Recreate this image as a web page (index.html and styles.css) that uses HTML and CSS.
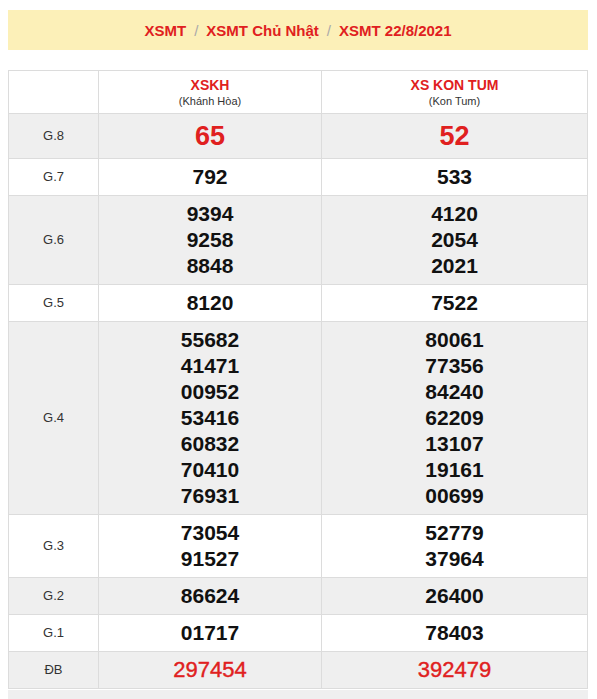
FILE: index.html
```html
<!DOCTYPE html>
<html lang="vi">
<head>
<meta charset="utf-8">
<link rel="stylesheet" href="styles.css">
</head>
<body>
<div class="crumb">
  <a>XSMT</a><span class="sep">/</span><a>XSMT Chủ Nhật</a><span class="sep">/</span><a>XSMT 22/8/2021</a>
</div>
<table class="kq">
  <colgroup><col class="c1"><col class="c2"><col class="c3"></colgroup>
  <tr class="head">
    <th></th>
    <th><div class="prov">XSKH</div><div class="sub">(Khánh Hòa)</div></th>
    <th><div class="prov">XS KON TUM</div><div class="sub">(Kon Tum)</div></th>
  </tr>
  <tr class="alt g8"><td class="lb">G.8</td><td>65</td><td>52</td></tr>
  <tr><td class="lb">G.7</td><td>792</td><td>533</td></tr>
  <tr class="alt"><td class="lb">G.6</td><td>9394<br>9258<br>8848</td><td>4120<br>2054<br>2021</td></tr>
  <tr><td class="lb">G.5</td><td>8120</td><td>7522</td></tr>
  <tr class="alt"><td class="lb">G.4</td><td>55682<br>41471<br>00952<br>53416<br>60832<br>70410<br>76931</td><td>80061<br>77356<br>84240<br>62209<br>13107<br>19161<br>00699</td></tr>
  <tr><td class="lb">G.3</td><td>73054<br>91527</td><td>52779<br>37964</td></tr>
  <tr class="alt"><td class="lb">G.2</td><td>86624</td><td>26400</td></tr>
  <tr><td class="lb">G.1</td><td>01717</td><td>78403</td></tr>
  <tr class="alt db"><td class="lb">ĐB</td><td class="num">297454</td><td class="num">392479</td></tr>
</table>
<div class="foot"></div>
</body>
</html>
```
FILE: styles.css
```css
body {
  margin: 10px 9px 0 8px;
  font-family: "Liberation Sans", Arial, sans-serif;
  background: #fff;
}
.crumb {
  background: #fcf0b8;
  height: 40px;
  display: flex;
  align-items: center;
  justify-content: center;
  font-size: 15px;
  font-weight: bold;
  color: #e02020;
}
.crumb a { color: #e02020; }
.crumb .sep { color: #aaa; font-weight: normal; margin: 0 8px; }
.kq {
  margin-top: 20px;
  width: 579px;
  border-collapse: collapse;
  table-layout: fixed;
}
.kq .c1 { width: 90px; }
.kq .c2 { width: 223px; }
.kq .c3 { width: 266px; }
.kq th, .kq td {
  border: 1px solid #dcdcdc;
  text-align: center;
  padding: 0;
}
.head th { height: 42px; font-weight: normal; }
.prov { color: #e02020; font-weight: bold; font-size: 14px; line-height: 17px; }
.sub { color: #333; font-size: 11px; line-height: 14px; }
.kq td {
  font-weight: bold;
  font-size: 21px;
  line-height: 26px;
  color: #111;
  padding: 5px 0;
}
.kq td.lb {
  font-weight: normal;
  font-size: 13px;
  color: #333;
}
.alt td { background: #efefef; }
.g8 td { font-size: 27px; color: #e02020; padding: 9px 0; }
.db td.num { color: #e02020; font-size: 22px; font-weight: normal; -webkit-text-stroke: 0.4px #e02020; }
.foot { background: #efefef; height: 12px; margin-top: 1px; width: 580px; }
```
